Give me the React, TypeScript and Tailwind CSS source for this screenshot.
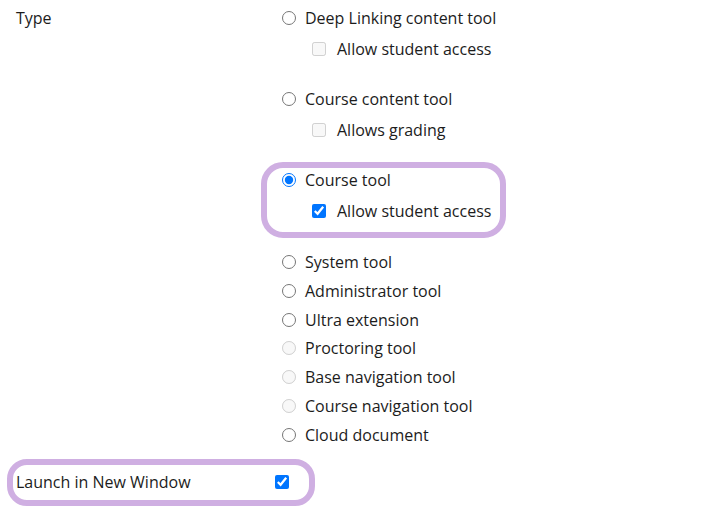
import React from 'react';

const PURPLE = 'border-[#cfafe2]';

function Radio({ label, checked = false, disabled = false }: { label: string; checked?: boolean; disabled?: boolean }) {
  return (
    <label className="flex h-6 items-center gap-[9px]">
      <input
        type="radio"
        name="type"
        defaultChecked={checked}
        disabled={disabled}
        className="m-0 h-[14px] w-[14px] shrink-0"
      />
      <span>{label}</span>
    </label>
  );
}

function Check({ label, checked = false, disabled = false }: { label: string; checked?: boolean; disabled?: boolean }) {
  return (
    <label className="ml-[30px] mt-[7px] flex h-6 items-center gap-[11px]">
      <input
        type="checkbox"
        defaultChecked={checked}
        disabled={disabled}
        className="m-0 h-[14px] w-[14px] shrink-0"
      />
      <span>{label}</span>
    </label>
  );
}

export default function App() {
  return (
    <div
      className="h-[512px] w-[702px] overflow-hidden bg-white pt-[6px] text-[16px] leading-6 text-[#1c1c1c]"
      style={{ fontFamily: '"Open Sans", "Noto Sans", sans-serif' }}
    >
      <div className="grid grid-cols-[266px_1fr] pl-4">
        <div>Type</div>
        <div className="flex flex-col">
          <Radio label="Deep Linking content tool" />
          <Check label="Allow student access" disabled />

          <div className="mt-[26px]">
            <Radio label="Course content tool" />
            <Check label="Allows grading" disabled />
          </div>

          {/* highlighted group */}
          <div className={`-ml-[21px] mt-[20px] w-[245px] rounded-[22px] border-[6px] ${PURPLE} pb-[9px] pl-[15px]`}>
            <Radio label="Course tool" checked />
            <Check label="Allow student access" checked />
          </div>

          <div className="mt-[12px] flex flex-col gap-[4.8px]">
            <Radio label="System tool" />
            <Radio label="Administrator tool" />
            <Radio label="Ultra extension" />
            <Radio label="Proctoring tool" disabled />
            <Radio label="Base navigation tool" disabled />
            <Radio label="Course navigation tool" disabled />
            <Radio label="Cloud document" />
          </div>
        </div>
      </div>

      <div className={`ml-[7px] mt-[12px] flex h-[47px] w-[308px] items-center rounded-[20px] border-[6px] ${PURPLE} pl-[3px]`}>
        <span className="w-[259px]">Launch in New Window</span>
        <input type="checkbox" defaultChecked className="m-0 h-[14px] w-[14px]" />
      </div>
    </div>
  );
}
